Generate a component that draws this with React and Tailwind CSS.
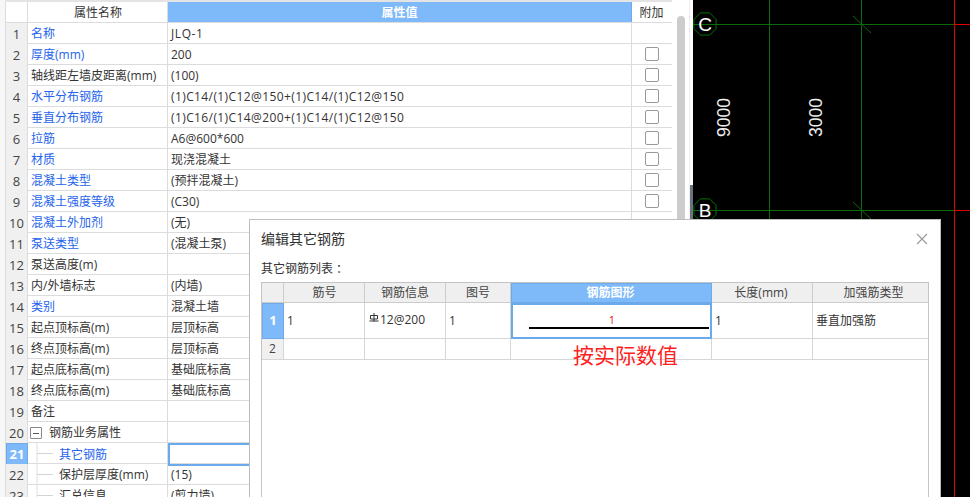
import React from "react";

const FONT = "[font-family:'Open_Sans','Noto_Sans_CJK_SC',sans-serif]";

const rows = [
  ["名称", "JLQ-1", 1, 0, "tracking-[0.6px]"],
  ["厚度(mm)", "200", 1, 1],
  ["轴线距左墙皮距离(mm)", "(100)", 0, 1],
  ["水平分布钢筋", "(1)C14/(1)C12@150+(1)C14/(1)C12@150", 1, 1, "tracking-[0.4px]"],
  ["垂直分布钢筋", "(1)C16/(1)C14@200+(1)C14/(1)C12@150", 1, 1, "tracking-[0.4px]"],
  ["拉筋", "A6@600*600", 1, 1],
  ["材质", "现浇混凝土", 1, 1],
  ["混凝土类型", "(预拌混凝土)", 1, 1],
  ["混凝土强度等级", "(C30)", 1, 1],
  ["混凝土外加剂", "(无)", 1, 0],
  ["泵送类型", "(混凝土泵)", 1, 0],
  ["泵送高度(m)", "", 0, 0],
  ["内/外墙标志", "(内墙)", 0, 0],
  ["类别", "混凝土墙", 1, 0],
  ["起点顶标高(m)", "层顶标高", 0, 0],
  ["终点顶标高(m)", "层顶标高", 0, 0],
  ["起点底标高(m)", "基础底标高", 0, 0],
  ["终点底标高(m)", "基础底标高", 0, 0],
  ["备注", "", 0, 0],
];

const COLS = "grid grid-cols-[22px_140px_464px_41px] h-[21px] border-b border-[#dcdcdc]";
const NUM = "flex items-center justify-center pt-[2px] bg-[#f0f0f0] border-r border-[#dcdcdc] text-[13px] text-[#444]";
const CELL = "flex items-center pl-[3px] pt-[1px] border-r border-[#dcdcdc] text-[12px] text-[#333] whitespace-nowrap overflow-hidden";

function Box() {
  return <span className="block w-[14px] h-[14px] rounded-[2px] border border-[#999] bg-white" />;
}

function TreeLine() {
  return (
    <svg width="26" height="21" viewBox="0 0 26 21" className="absolute left-0 top-0">
      <path d="M9 0V21" stroke="#e0e0e0" strokeWidth="1" fill="none" />
      <path d="M9 10.5H25" stroke="#d4d4d4" strokeWidth="1" fill="none" />
    </svg>
  );
}

function PropertyGrid() {
  return (
    <div className="w-[672px] h-[497px] overflow-hidden bg-[#f7f7f7] pl-[5px] shrink-0">
      <div className="h-[2px] bg-[#e4e4e4]" />
      <div className="border-l border-[#dcdcdc] bg-white h-full">
        <div className={COLS}>
          <div className="bg-white border-r border-[#dcdcdc]" />
          <div className="flex items-center justify-center border-r border-[#dcdcdc] text-[12px] text-[#333] pt-[1px] pl-[1px]">属性名称</div>
          <div className="flex items-center justify-center bg-[#7eb9fa] border-r border-[#6ea9ea] text-[12px] font-bold text-white pt-[1px]">属性值</div>
          <div className="flex items-center justify-center text-[12px] text-[#333] pt-[2px] pr-[2px]">附加</div>
        </div>
        {rows.map((r, i) => (
          <div key={i} className={COLS}>
            <div className={NUM}>{i + 1}</div>
            <div className={`${CELL} ${r[2] ? "text-[#2563eb]" : ""}`}>{r[0]}</div>
            <div className={`${CELL} ${r[4] || ""}`}>{r[1]}</div>
            <div className="flex items-center justify-center pr-[1px] pb-[1px]">{r[3] ? <Box /> : null}</div>
          </div>
        ))}
        <div className={COLS}>
          <div className={NUM}>20</div>
          <div className={`${CELL} gap-[7px]`}>
            <span className="flex items-center justify-center -ml-[1px] w-[12px] h-[12px] border border-[#888] rounded-[1px] text-[#555]">
              <span className="block w-[6px] h-px bg-[#555]" />
            </span>
            <span>钢筋业务属性</span>
          </div>
          <div className={CELL} />
          <div />
        </div>
        <div className={COLS}>
          <div className="flex items-center justify-center pt-[1px] bg-[#7eb9fa] border border-[#6ea9ea] text-[13px] font-bold text-white">21</div>
          <div className={`${CELL} relative pl-[31px] text-[#2563eb]`}><TreeLine />其它钢筋</div>
          <div className="border-2 border-[#6aa9ec]" />
          <div />
        </div>
        <div className={COLS}>
          <div className={NUM}>22</div>
          <div className={`${CELL} relative pl-[31px]`}><TreeLine />保护层厚度(mm)</div>
          <div className={CELL}>(15)</div>
          <div />
        </div>
        <div className={COLS}>
          <div className={NUM}>23</div>
          <div className={`${CELL} relative pl-[31px]`}><TreeLine />汇总信息</div>
          <div className={CELL}>(剪力墙)</div>
          <div />
        </div>
      </div>
    </div>
  );
}

function Scrollbar() {
  return (
    <div className="w-[17px] h-[497px] bg-white pt-[16px] pl-[5px] shrink-0">
      <div className="w-[8px] h-full bg-[#cdcdcd] rounded-t-[4px]" />
    </div>
  );
}

function Gutter() {
  return (
    <div className="w-[4px] h-[497px] bg-white pt-[185px] shrink-0 border-l border-[#eeeeee]">
      <div className="w-full h-full bg-[#6b7280]" />
    </div>
  );
}

function Octagon({ cy, label }) {
  const cx = 12, r = 12;
  const pts = Array.from({ length: 8 }, (_, i) => {
    const a = (Math.PI / 8) * (2 * i + 1);
    return `${(cx + r * Math.cos(a)).toFixed(1)},${(cy + r * Math.sin(a)).toFixed(1)}`;
  }).join(" ");
  return (
    <g>
      <polygon points={pts} fill="none" stroke="#0a700a" strokeWidth="1" />
      <text x={cx} y={cy + 7} textAnchor="middle" fill="#fff" fontSize="19" fontFamily="'Liberation Sans',sans-serif">{label}</text>
    </g>
  );
}

function Canvas() {
  return (
    <div className="flex-1 h-[497px] bg-black">
      <svg width="277" height="497" viewBox="0 0 277 497" className="block">
        <g stroke="#0b6a0b" strokeWidth="1" fill="none">
          <path d="M0 24.5H261M0 210.5H261" />
          <path d="M76.5 0V497M168.5 0V497" />
          <path d="M160 16L178 33M160 202L178 219" />
        </g>
        <path d="M261.5 0V497M261 24.5H277M261 210.5H277" stroke="#e00000" strokeWidth="1" fill="none" />
        <Octagon cy={24} label="C" />
        <Octagon cy={210} label="B" />
        <g fill="#eeeeee" fontSize="19" fontFamily="'Liberation Sans',sans-serif">
          <text transform="translate(37 137) rotate(-90)" textLength="39" lengthAdjust="spacingAndGlyphs">9000</text>
          <text transform="translate(129 137) rotate(-90)" textLength="39" lengthAdjust="spacingAndGlyphs">3000</text>
        </g>
      </svg>
    </div>
  );
}

const DCOLS = "grid grid-cols-[22px_81px_81px_65px_201px_101px_115px]";
const DH = "flex items-center justify-center h-full pt-[1px] border-r border-b border-[#cccccc] bg-[#efefef] text-[12px] text-[#444]";
const DC = "flex items-center pl-[3px] border-r border-b border-[#d6d6d6] text-[12px] text-[#333] whitespace-nowrap";

function RebarMark() {
  return (
    <svg width="10" height="9" viewBox="0 0 10 9" className="ml-[1px] mr-[1px] -mt-[6px]">
      <path d="M5 0V8.5M1.5 2.5V6H8.5V2.5H1.5M0.5 8H9.5" stroke="#333" strokeWidth="1" fill="none" />
    </svg>
  );
}

function Dialog() {
  return (
    <div className="absolute left-[249px] top-[219px] w-[692px] h-[278px] bg-white border-t border-l border-r border-[#bdbdbd] pl-[11px] pr-[12px]">
      <div className="flex items-center justify-between h-[39px] pb-[3px] text-[14px] text-[#333]">
        <span>编辑其它钢筋</span>
        <svg width="12" height="12" viewBox="0 0 12 12" className="mt-[1px]">
          <path d="M1 1L11 11M11 1L1 11" stroke="#999" strokeWidth="1.1" fill="none" />
        </svg>
      </div>
      <div className="h-[23px] flex items-start pt-[1px] text-[12px] text-[#333]">
        其它钢筋列表<span className="[font-family:'Noto_Sans_CJK_TC',sans-serif]">：</span>
      </div>
      <div className="relative w-[668px] h-[216px] border-t border-l border-r border-[#c4c4c4]">
        <div className={`${DCOLS} h-[20px]`}>
          <div className={DH} />
          <div className={`${DH} pl-[1px]`}>筋号</div>
          <div className={DH}>钢筋信息</div>
          <div className={DH}>图号</div>
          <div className="flex items-center justify-center h-full pr-[2px] bg-[#7eb9fa] border border-[#6ea9ea] text-[12px] font-bold text-white">钢筋图形</div>
          <div className={`${DH} pr-[2px]`}>长度(mm)</div>
          <div className={`${DH} border-r-0 pl-[6px]`}>加强筋类型</div>
        </div>
        <div className={`${DCOLS} h-[36px]`}>
          <div className="flex items-center justify-center bg-[#7eb9fa] border border-[#6ea9ea] text-[13px] font-bold text-white">1</div>
          <div className={DC}>1</div>
          <div className={DC}><RebarMark /><span className="-mt-[2px]">12@200</span></div>
          <div className={DC}>1</div>
          <div className="relative border-2 border-[#6aa9ec]">
            <span className="absolute left-[96px] top-[9px] text-[10px] leading-[12px] text-[#e00000]">1</span>
            <span className="absolute left-[16px] top-[22px] w-[180px] h-[2px] bg-black" />
          </div>
          <div className={DC}>1</div>
          <div className={`${DC} border-r-0`}>垂直加强筋</div>
        </div>
        <div className={`${DCOLS} h-[21px]`}>
          <div className="flex items-center justify-center bg-[#f0f0f0] border-r border-b border-[#d6d6d6] text-[12px] text-[#444]">2</div>
          <div className={DC} />
          <div className={DC} />
          <div className={DC} />
          <div className={DC} />
          <div className={DC} />
          <div className={`${DC} border-r-0`} />
        </div>
        <span className="absolute left-[311px] top-[58px] text-[21px] leading-[28px] text-[#ff2222] whitespace-nowrap">按实际数值</span>
      </div>
    </div>
  );
}

export default function App() {
  return (
    <div className={`relative flex w-[970px] h-[497px] overflow-hidden bg-white ${FONT}`}>
      <PropertyGrid />
      <Scrollbar />
      <Gutter />
      <Canvas />
      <Dialog />
    </div>
  );
}
